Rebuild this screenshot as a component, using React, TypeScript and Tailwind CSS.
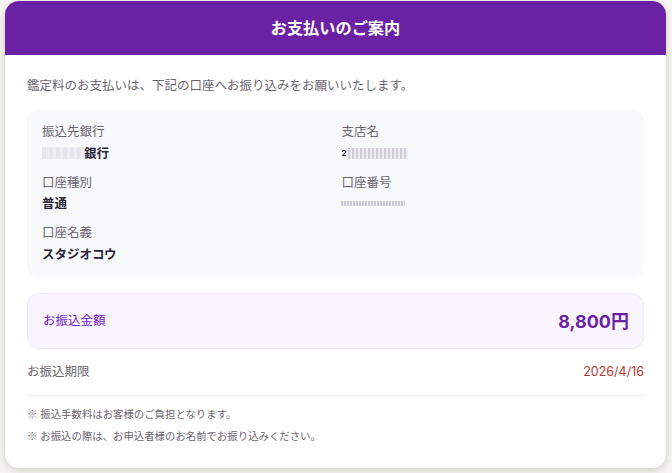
const font = { fontFamily: 'Inter, "Noto Sans CJK JP", sans-serif' };

const Field = ({ label, children }: { label: string; children: React.ReactNode }) => (
  <div className="flex flex-col gap-[2.5px]">
    <span className="text-[12.5px] leading-[19px] text-[#6b6570]">{label}</span>
    <div className="h-[19px] flex items-center text-[12.5px] leading-[19px] font-semibold text-[#2a2438]">{children}</div>
  </div>
);

// ※ needs the CJK glyph, Inter's one is too small
const Note = ({ children }: { children: React.ReactNode }) => (
  <p className="h-[21.5px]">
    <span className="leading-none" style={{ fontFamily: '"Noto Sans CJK JP", sans-serif' }}>※</span> {children}
  </p>
);

export default function App() {
  return (
    <div className="min-h-[473px] bg-[#f8f6f3] pt-px pl-[5px] overflow-hidden" style={font}>
      <div className="w-[661px] h-[467px] bg-white rounded-[14px] overflow-hidden shadow-[0_2px_8px_rgba(0,0,0,0.18)]">
        {/* header */}
        <div className="h-[54px] bg-[#6b21a3] flex items-center justify-center">
          <h1 className="text-[16.2px] font-bold text-white">お支払いのご案内</h1>
        </div>

        <div className="px-[22px] pt-[21px]">
          <p className="text-[12.5px] leading-[19px] text-[#6b6570]">
            鑑定料のお支払いは、下記の口座へお振り込みをお願いいたします。
          </p>

          {/* bank info */}
          <div className="mt-[14px] h-[169px] bg-[#f8f9fb] rounded-[12px] pl-[15px] pt-[13px] grid grid-cols-[299.5px_1fr] gap-y-[10px] content-start">
            <Field label="振込先銀行">
              <span className="w-[42px] h-[12px] bg-[repeating-linear-gradient(90deg,#e6e4ec_0_4px,#eeedf2_4px_7px)] blur-[0.5px]" />
              銀行
            </Field>
            <Field label="支店名">
              <span className="text-[8px] font-bold">2</span>
              <span className="w-[60px] h-[11px] ml-px bg-[repeating-linear-gradient(90deg,#cfccd8_0_2px,#eeedf2_2px_4px)] blur-[0.6px]" />
            </Field>
            <Field label="口座種別">普通</Field>
            <Field label="口座番号">
              <span className="w-[64px] h-[5px] -ml-px bg-[repeating-linear-gradient(90deg,#c9c7d2_0_2px,#f0eff4_2px_3px)] blur-[0.5px]" />
            </Field>
            <Field label="口座名義">スタジオコウ</Field>
          </div>

          {/* amount */}
          <div className="mt-[15px] h-[56px] bg-[#f9f5ff] border border-[#ede5fb] rounded-[12px] flex items-center justify-between pl-[15px] pr-[14px]">
            <span className="text-[12.5px] text-[#7318c4]">お振込金額</span>
            <span className="text-[18px] font-bold text-[#6b21a3]">8,800円</span>
          </div>

          {/* deadline */}
          <div className="mt-[13px] flex items-center justify-between text-[12.5px] leading-[19px]">
            <span className="text-[#6b6570]">お振込期限</span>
            <span className="text-[#b93a2e]">2026/4/16</span>
          </div>

          {/* notes */}
          <div className="mt-[14px] pt-[8px] border-t border-[#f0eff3] text-[10.4px] leading-[21.5px] text-[#6b6570]">
            <Note>振込手数料はお客様のご負担となります。</Note>
            <Note>お振込の際は、お申込者様のお名前でお振り込みください。</Note>
          </div>
        </div>
      </div>
    </div>
  );
}
